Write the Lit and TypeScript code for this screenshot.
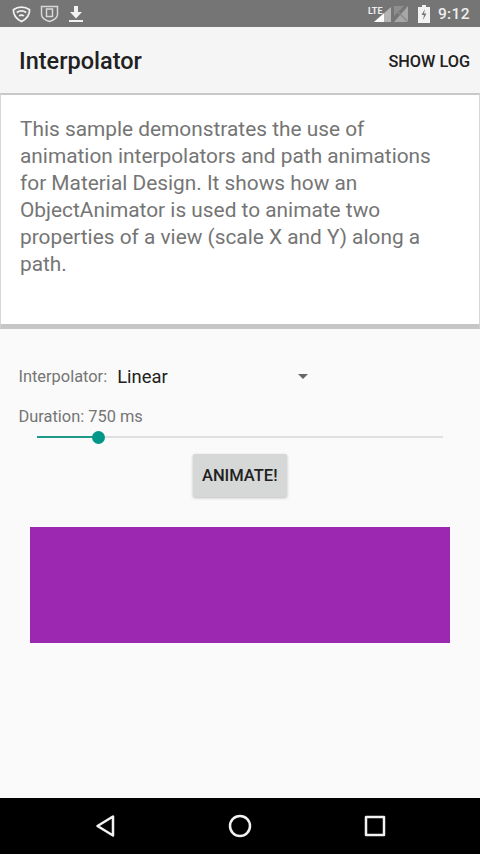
import { LitElement, html, css } from "lit";
import { customElement } from "lit/decorators.js";

@customElement("app-root")
export class AppRoot extends LitElement {
  static styles = css`
    :host { display: flex; flex-direction: column; width: 480px; height: 854px; background: #fafafa; font-family: Roboto, "Noto Sans", sans-serif; overflow: hidden; }
    .status { height: 27px; background: #757575; display: flex; align-items: center; justify-content: space-between; padding: 0 10px 0 12px; flex: none; }
    .status .group { display: flex; align-items: center; }
    .left { gap: 9px; }
    .time { color: #eee; font-size: 15.5px; font-weight: 500; letter-spacing: .4px; margin-left: 8px; }
    .sim { margin-left: 3px; }
    .batt { margin-left: 10px; }
    .appbar { height: 66px; background: #f5f5f5; flex: none; display: flex; align-items: center; justify-content: space-between; padding: 2px 10px 0 19px; box-sizing: border-box; }
    .title { font-size: 23.5px; font-weight: 500; color: #212121; }
    .action { font-size: 16.3px; font-weight: 500; color: #212121; }
    .desc { height: 236px; flex: none; box-sizing: border-box; background: #fff; border-style: solid; border-color: #d6d6d6; border-width: 2px 1px 5px 1px; border-top-color: #c8c8c8; border-bottom-color: #c6c6c6; padding: 21px 19px; font-size: 20.85px; line-height: 27px; color: #757575; }
    .content { flex: 1; display: flex; flex-direction: column; padding: 0 19px 0 18.5px; }
    .row { display: flex; align-items: center; margin-top: 35px; height: 24px; }
    .label { font-size: 16.4px; color: #757575; }
    .value { font-size: 18.4px; color: #212121; margin-left: 10px; flex: none; width: 181px; }
    .caret { width: 0; height: 0; border-left: 5.5px solid transparent; border-right: 5.5px solid transparent; border-top: 5px solid #666; }
    .duration { margin-top: 19px; height: 20px; line-height: 20px; }
    .slider { display: flex; align-items: center; margin: 2px 18px 0 18px; height: 16px; }
    .fill { width: 61px; height: 2px; background: #1f9a8a; }
    .thumb { width: 13px; height: 13px; border-radius: 50%; background: #009688; flex: none; margin-left: -6px; }
    .track { flex: 1; height: 2px; background: #e0e0e0; }
    .btnrow { display: flex; justify-content: center; margin-top: 9px; }
    button { all: unset; width: 94px; height: 43px; box-sizing: border-box; display: flex; align-items: center; justify-content: center; background: #d6d7d7; border-radius: 2px; box-shadow: 0 1px 3px rgba(0,0,0,.25); font-size: 16.5px; font-weight: 500; color: #212121; }
    .box { height: 116px; margin: 30px 11px 0; background: #9c27b0; flex: none; }
    .nav { height: 56px; background: #000; flex: none; display: grid; grid-template-columns: repeat(3, 1fr); padding: 0 37.5px; align-items: center; justify-items: center; }
    svg { display: block; }
  `;
  render() {
    return html`
      <div class="status">
        <div class="group left">
          <svg width="19" height="18" viewBox="0 0 20 18" fill="none" stroke="#f2f2f2" stroke-width="1.8">
            <path d="M1.500 4.500C6.500.8 13.500.8 18.500 4.500c.2 4-2 9-8.500 12.500C3.500 13.500 1.300 8.500 1.500 4.500Z"/>
            <path d="M5 7.500c3-2 7-2 10 0"/><path d="M7.500 11c1.500-1 3.500-1 5 0"/>
          </svg>
          <svg width="19" height="19" viewBox="0 0 19 19" fill="none" stroke="#d8d8d8" stroke-width="1.5">
            <path d="M1.500 2.500h16v8c0 3-3.500 5.500-8 7-4.500-1.500-8-4-8-7Z"/>
            <rect x="6.500" y="5" width="6" height="7.500"/>
          </svg>
          <svg width="16" height="18" viewBox="0 0 16 18" fill="#f2f2f2">
            <path d="M6 1h4v6h4l-6 6.500L2 7h4Z"/><rect x="1" y="15" width="14" height="2"/>
          </svg>
        </div>
        <div class="group">
          <svg width="24" height="18" viewBox="0 0 24 18">
            <path d="M24 2v15H7Z" fill="#b4b4b4"/><path d="M17 8.200V17H7Z" fill="#fff"/>
            <text x="1" y="9" font-family="Roboto" font-size="9" font-weight="700" fill="#eee">LTE</text>
          </svg>
          <svg class="sim" width="14" height="16" viewBox="0 0 14 16"><path d="M14 0v16H0Z" fill="#a6a6a6"/><path d="M0 1l14 14v1H13L0 3Z" fill="#8a8a8a"/><path d="M0 0h10L0 10Z" fill="#8e8e8e"/></svg>
          <svg class="batt" width="12" height="18" viewBox="0 0 12 18">
            <path d="M4 0h4v2h4v16H0V2h4Z" fill="#f2f2f2"/><path d="M7 4 3.500 10H6l-1 5 3.500-6.500H6Z" fill="#757575"/>
          </svg>
          <span class="time">9:12</span>
        </div>
      </div>
      <div class="appbar"><span class="title">Interpolator</span><span class="action">SHOW LOG</span></div>
      <div class="desc">This sample demonstrates the use of animation interpolators and path animations for Material Design. It shows how an ObjectAnimator is used to animate two properties of a view (scale X and Y) along a path.</div>
      <div class="content">
        <div class="row"><span class="label">Interpolator:</span><span class="value">Linear</span><span class="caret"></span></div>
        <div class="label duration">Duration: 750 ms</div>
        <div class="slider"><div class="fill"></div><div class="thumb"></div><div class="track"></div></div>
        <div class="btnrow"><button>ANIMATE!</button></div>
        <div class="box"></div>
      </div>
      <div class="nav">
        <svg width="24" height="24" viewBox="0 0 24 24" fill="none" stroke="#f2f2f2" stroke-width="2.5" stroke-linejoin="round"><path d="M20 2.500v19L4.500 12Z"/></svg>
        <svg width="24" height="24" viewBox="0 0 24 24" fill="none" stroke="#f2f2f2" stroke-width="2.5"><circle cx="12" cy="12" r="10"/></svg>
        <svg width="24" height="24" viewBox="0 0 24 24" fill="none" stroke="#f2f2f2" stroke-width="2.5" stroke-linejoin="round"><rect x="3" y="3" width="18" height="18"/></svg>
      </div>
    `;
  }
}
